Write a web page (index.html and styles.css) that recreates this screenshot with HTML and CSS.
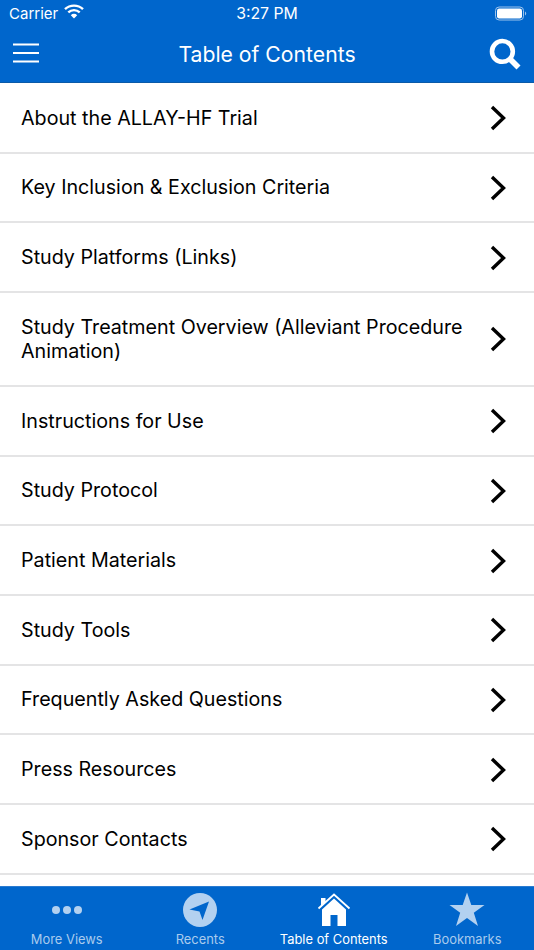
FILE: index.html
```html
<!DOCTYPE html>
<html lang="en">
<head>
<meta charset="utf-8">
<title>Table of Contents</title>
<link rel="stylesheet" href="styles.css">
</head>
<body>
<div class="app">
  <header class="top">
    <div class="status">
      <div class="status-left">
        <span>Carrier</span>
        <svg class="wifi" viewBox="0 0 20 15" width="20" height="15"><path d="M1 5.200a13 13 0 0 1 18 0" fill="none" stroke="#fff" stroke-width="2.400"/><path d="M4.300 8.400a8.300 8.300 0 0 1 11.400 0" fill="none" stroke="#fff" stroke-width="2.400"/><path d="M10 14.600l-3.200-3.400a4.500 4.500 0 0 1 6.400 0z" fill="#fff"/></svg>
      </div>
      <div class="status-time">3:27 PM</div>
      <div class="status-right">
        <svg viewBox="0 0 32 15" width="32" height="15"><rect x="0.500" y="1" width="28" height="13" rx="3.600" fill="none" stroke="#9cc3ec" stroke-width="1"/><rect x="2" y="2.500" width="25" height="10" rx="2.200" fill="#fff"/><path d="M30 5.500a2.300 2.300 0 0 1 0 4z" fill="#9cc3ec"/></svg>
      </div>
    </div>
    <div class="nav">
      <svg class="menu" viewBox="0 0 26 20" width="26" height="20"><path d="M0 1.500h26M0 10h26M0 18.500h26" stroke="#fff" stroke-width="2.200"/></svg>
      <h1 class="title">Table of Contents</h1>
      <svg class="search" viewBox="0 0 32 32" width="32" height="32"><circle cx="13.400" cy="13.400" r="10.400" fill="none" stroke="#fff" stroke-width="4.600"/><path d="M21 21l8.500 8.500" stroke="#fff" stroke-width="5.600"/></svg>
    </div>
  </header>
  <main class="list">
    <a class="row"><span>About the ALLAY-HF Trial</span><svg class="chev" viewBox="0 0 16 26" width="16" height="26"><path d="M2 2l11.500 11L2 24" fill="none" stroke="#000" stroke-width="3.400"/></svg></a>
    <a class="row"><span>Key Inclusion &amp; Exclusion Criteria</span><svg class="chev" viewBox="0 0 16 26" width="16" height="26"><path d="M2 2l11.500 11L2 24" fill="none" stroke="#000" stroke-width="3.400"/></svg></a>
    <a class="row"><span>Study Platforms (Links)</span><svg class="chev" viewBox="0 0 16 26" width="16" height="26"><path d="M2 2l11.500 11L2 24" fill="none" stroke="#000" stroke-width="3.400"/></svg></a>
    <a class="row tall"><span>Study Treatment Overview (Alleviant Procedure Animation)</span><svg class="chev" viewBox="0 0 16 26" width="16" height="26"><path d="M2 2l11.500 11L2 24" fill="none" stroke="#000" stroke-width="3.400"/></svg></a>
    <a class="row"><span>Instructions for Use</span><svg class="chev" viewBox="0 0 16 26" width="16" height="26"><path d="M2 2l11.500 11L2 24" fill="none" stroke="#000" stroke-width="3.400"/></svg></a>
    <a class="row"><span>Study Protocol</span><svg class="chev" viewBox="0 0 16 26" width="16" height="26"><path d="M2 2l11.500 11L2 24" fill="none" stroke="#000" stroke-width="3.400"/></svg></a>
    <a class="row"><span>Patient Materials</span><svg class="chev" viewBox="0 0 16 26" width="16" height="26"><path d="M2 2l11.500 11L2 24" fill="none" stroke="#000" stroke-width="3.400"/></svg></a>
    <a class="row"><span>Study Tools</span><svg class="chev" viewBox="0 0 16 26" width="16" height="26"><path d="M2 2l11.500 11L2 24" fill="none" stroke="#000" stroke-width="3.400"/></svg></a>
    <a class="row"><span>Frequently Asked Questions</span><svg class="chev" viewBox="0 0 16 26" width="16" height="26"><path d="M2 2l11.500 11L2 24" fill="none" stroke="#000" stroke-width="3.400"/></svg></a>
    <a class="row"><span>Press Resources</span><svg class="chev" viewBox="0 0 16 26" width="16" height="26"><path d="M2 2l11.500 11L2 24" fill="none" stroke="#000" stroke-width="3.400"/></svg></a>
    <a class="row"><span>Sponsor Contacts</span><svg class="chev" viewBox="0 0 16 26" width="16" height="26"><path d="M2 2l11.500 11L2 24" fill="none" stroke="#000" stroke-width="3.400"/></svg></a>
  </main>
  <nav class="tabs">
    <div class="tab">
      <svg viewBox="0 0 36 36" width="36" height="36"><circle cx="7" cy="18" r="4" fill="#b3d1f0"/><circle cx="18" cy="18" r="4" fill="#b3d1f0"/><circle cx="29" cy="18" r="4" fill="#b3d1f0"/></svg>
      <span>More Views</span>
    </div>
    <div class="tab">
      <svg viewBox="0 0 36 36" width="36" height="36"><circle cx="18" cy="18" r="17" fill="#b3d1f0"/><path d="M7.500 17.500L27 9.500 20.500 28 17.500 19.500z" fill="#0066cc"/></svg>
      <span>Recents</span>
    </div>
    <div class="tab active">
      <svg viewBox="0 0 36 36" width="36" height="36"><path d="M2.500 16.500L18 2.500l15.500 14" fill="none" stroke="#fff" stroke-width="1.800"/><path d="M6 17.500L18 6.500l12 11V34H21.500V23h-7v11H6zM5 6h4.500v4.500L5 14.500z" fill="#fff"/></svg>
      <span>Table of Contents</span>
    </div>
    <div class="tab">
      <svg viewBox="0 0 36 36" width="36" height="36"><path d="M18 0.500l4.300 12.500H35.500l-10.700 7.800 4.200 13.200L18 26l-11 8 4.200-13.200L0.500 13h13.200z" fill="#b3d1f0"/></svg>
      <span>Bookmarks</span>
    </div>
  </nav>
</div>
</body>
</html>
```
FILE: styles.css
```css
* { box-sizing: border-box; }
html, body { margin: 0; padding: 0; }
body { font-family: Inter, "Noto Sans", "Liberation Sans", sans-serif; background: #fff; color: #000; }
.app { width: 534px; height: 950px; display: flex; flex-direction: column; overflow: hidden; }
.top { height: 83px; background: #0066cc; color: #fff; flex: none; border-bottom: 1px solid #0a5aa8; }
.status { height: 26px; display: grid; grid-template-columns: 1fr auto 1fr; align-items: center; padding: 0 7px 0 9px; font-size: 15px; }
.status-time { font-size: 15.800px; margin-left: -2px; }
.status-left { display: flex; align-items: center; gap: 6px; }
.wifi { margin-top: -4px; }
.status-right { display: flex; justify-content: flex-end; }
.nav { height: 56px; display: flex; align-items: center; justify-content: space-between; padding: 0 13px; position: relative; }
.title { margin: 0; font-size: 21.200px; font-weight: 400; position: absolute; left: 0; right: 0; text-align: center; }
.search { position: relative; margin-top: -1px; }
.menu { position: relative; margin-top: -2px; }
.list { flex: 1; overflow: hidden; padding-top: 1px; }
.row { display: flex; align-items: center; justify-content: space-between; height: 69.670px; padding: 0 28px 0 21px; border-bottom: 2px solid #e4e4e5; font-size: 19.700px; line-height: 24px; }
.row.tall { height: 94px; }
.row span { max-width: 450px; }
.chev { margin-top: 1px; }
.tabs { height: 64px; flex: none; background: #0066cc; display: grid; grid-template-columns: repeat(4, 1fr); padding: 5px 0 0; border-top: 1px solid #2a7bd0; }
.tab { display: flex; flex-direction: column; align-items: center; gap: 4px; color: #a9cbed; font-size: 12.900px; line-height: 16px; }
.tab.active { color: #fff; }
```
